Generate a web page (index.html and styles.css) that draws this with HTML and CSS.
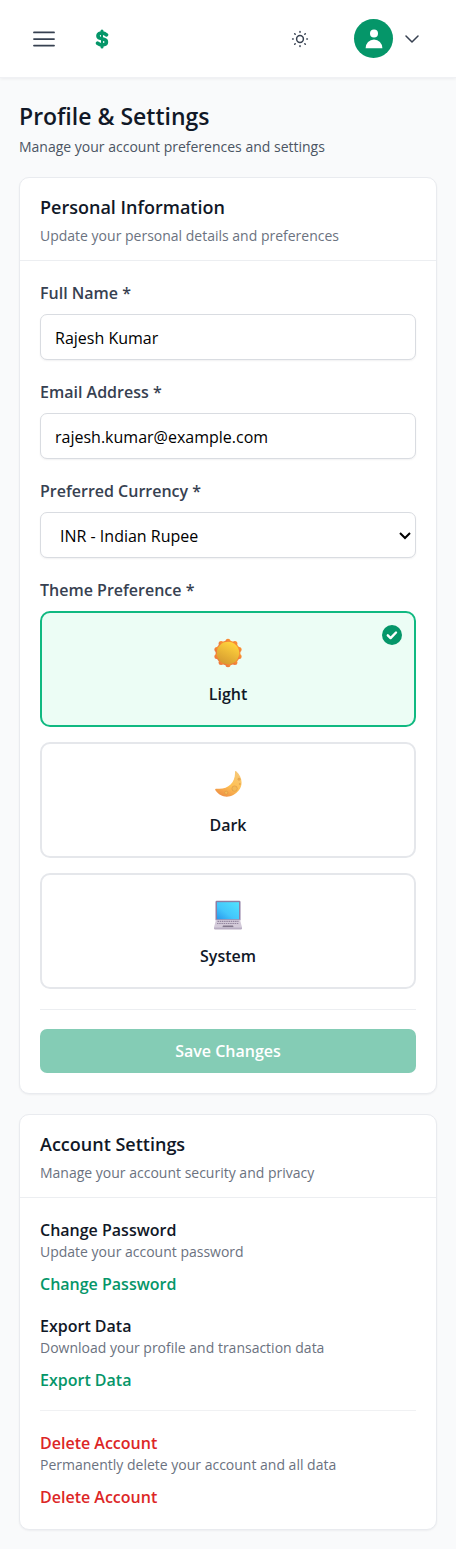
FILE: index.html
```html
<!DOCTYPE html>
<html lang="en">
<head>
<meta charset="utf-8">
<meta name="viewport" content="width=device-width, initial-scale=1">
<title>Profile &amp; Settings</title>
<link rel="stylesheet" href="styles.css">
</head>
<body>
<header class="topbar">
  <div class="topbar-group topbar-start">
    <button class="icon-button" type="button" aria-label="Open menu">
      <svg width="28" height="28" viewBox="0 0 24 24" fill="none" stroke="currentColor" stroke-width="1.5" stroke-linecap="round" stroke-linejoin="round"><path d="M3.4 6.4h17.2M3.4 12h17.2M3.4 17.6h17.2"/></svg>
    </button>
    <a class="brand" href="#" aria-label="Home">
      <svg width="14" height="20" viewBox="0 0 14 20" fill="none" stroke="currentColor" stroke-width="3.6" stroke-linecap="round" stroke-linejoin="round"><path d="M11.5 5.8C9.8 4.3 7.6 3.8 5.3 4.3C2.4 5 2.2 8.2 4.8 9.1L9.3 10.5C12.2 11.5 12 14.9 9.2 15.6C6.7 16.2 4.3 15.5 2.6 14.2"/><path d="M7 2v2M7 16v2" stroke-width="3"/><path d="M7 5v10" stroke-width="2"/></svg>
    </a>
  </div>
  <div class="topbar-group topbar-end">
    <button class="icon-button" type="button" aria-label="Toggle theme">
      <svg width="18" height="18" viewBox="0 0 18 18" fill="none" stroke="currentColor" stroke-width="1.5" stroke-linecap="round"><circle cx="9" cy="9" r="3.4"/><path d="M9 1.6v.6M9 15.8v.6M1.6 9h.6M15.8 9h.6M3.7 3.7l.5.5M13.8 13.8l.5.5M3.7 14.3l.5-.5M13.8 4.2l.5-.5"/></svg>
    </button>
    <button class="account-button" type="button" aria-label="Account menu">
      <span class="avatar"><svg width="18" height="20" viewBox="0 0 18 20" fill="currentColor"><circle cx="9" cy="4.6" r="4"/><path d="M.6 19.2a8.4 8.8 0 0 1 16.8 0z"/></svg></span>
      <svg width="14" height="8" viewBox="0 0 14 8" fill="none" stroke="currentColor" stroke-width="1.5" stroke-linecap="round" stroke-linejoin="round"><path d="M1 1l6 6 6-6"/></svg>
    </button>
  </div>
</header>

<main class="page">
  <div class="page-heading">
    <h1 class="page-title">Profile &amp; Settings</h1>
    <p class="page-subtitle">Manage your account preferences and settings</p>
  </div>

  <section class="card">
    <div class="card-header">
      <h2 class="card-title">Personal Information</h2>
      <p class="card-description">Update your personal details and preferences</p>
    </div>
    <form class="card-body form">
      <div class="field">
        <label class="label" for="name">Full Name *</label>
        <input class="control" id="name" type="text" value="Rajesh Kumar">
      </div>
      <div class="field">
        <label class="label" for="email">Email Address *</label>
        <input class="control" id="email" type="email" value="rajesh.kumar@example.com">
      </div>
      <div class="field">
        <label class="label" for="currency">Preferred Currency *</label>
        <div class="select">
          <select class="control control-select" id="currency"><option>INR - Indian Rupee</option></select>
          <svg class="select-arrow" width="12" height="8" viewBox="0 0 12 8" fill="none" stroke="#000" stroke-width="2"><path d="M1 1l5 5 5-5"/></svg>
        </div>
      </div>
      <div class="field" role="radiogroup" aria-labelledby="theme-label">
        <span class="label" id="theme-label">Theme Preference *</span>
        <div class="themes">
          <label class="theme">
            <input class="theme-radio" type="radio" name="theme" value="light" checked>
            <svg class="theme-icon" viewBox="0 0 30 30">
              <defs>
                <linearGradient id="sun-rays" x1="1" y1="0" x2="0" y2="1"><stop offset="0" stop-color="#ff9a2e"/><stop offset="1" stop-color="#e8703f"/></linearGradient>
                <linearGradient id="sun-disc" x1=".75" y1=".1" x2=".3" y2="1"><stop offset="0" stop-color="#ffd23c"/><stop offset="1" stop-color="#d59a30"/></linearGradient>
              </defs>
              <g fill="url(#sun-rays)"><circle cx="15" cy="15" r="12.4"/><circle cx="15" cy="3.3" r="2.5"/><circle cx="21.9" cy="5.5" r="2.5"/><circle cx="26.1" cy="11.4" r="2.5"/><circle cx="26.1" cy="18.6" r="2.5"/><circle cx="21.9" cy="24.5" r="2.5"/><circle cx="15" cy="26.7" r="2.5"/><circle cx="8.1" cy="24.5" r="2.5"/><circle cx="3.9" cy="18.6" r="2.5"/><circle cx="3.9" cy="11.4" r="2.5"/><circle cx="8.1" cy="5.5" r="2.5"/></g>
              <circle cx="15" cy="15" r="11.2" fill="url(#sun-disc)"/>
            </svg>
            <span class="theme-name">Light</span>
            <svg class="theme-check" viewBox="0 0 20 20"><circle cx="10" cy="10" r="10" fill="#059669"/><path d="M5.800 10.300l2.800 2.800 5.400-5.600" fill="none" stroke="#fff" stroke-width="2.400" stroke-linecap="round" stroke-linejoin="round"/></svg>
          </label>
          <label class="theme">
            <input class="theme-radio" type="radio" name="theme" value="dark">
            <svg class="theme-icon" viewBox="0 0 30 30">
              <defs><linearGradient id="moon" x1=".8" y1="0" x2=".3" y2="1"><stop offset="0" stop-color="#f6c879"/><stop offset=".55" stop-color="#ffc153"/><stop offset="1" stop-color="#ee9146"/></linearGradient></defs>
              <path d="M23.200 2.200c6 5.200 7.200 13.500 2.500 19.400C20 29 8.500 30.500 2.400 21.300c-.7-1.100.1-1.800 1.300-1.600C14.600 21 22.500 14 22 3c0-.9.5-1.300 1.200-.8z" fill="url(#moon)"/>
              <g fill="#f3b955" stroke="#dc9546" stroke-width=".6"><circle cx="21.600" cy="19.600" r="2.700"/><circle cx="13.200" cy="23.700" r="1.600"/><circle cx="26" cy="10.200" r="1.100"/><circle cx="26.800" cy="15" r=".6"/></g>
            </svg>
            <span class="theme-name">Dark</span>
          </label>
          <label class="theme">
            <input class="theme-radio" type="radio" name="theme" value="system">
            <svg class="theme-icon" viewBox="0 0 30 30">
              <defs><linearGradient id="screen" x1="0" y1="1" x2="1" y2="0"><stop offset="0" stop-color="#2898ec"/><stop offset=".4" stop-color="#43c6fb"/><stop offset="1" stop-color="#50e3ff"/></linearGradient></defs>
              <rect x="2.500" y=".8" width="25" height="20" rx="1.200" fill="#8d7da3"/>
              <rect x="4" y="2.200" width="22" height="17" fill="url(#screen)"/>
              <path d="M3 19.800h24l2 7.500H1z" fill="#d3cad9"/>
              <path d="M4.500 21.300h21M4 23.500h22" stroke="#93869f" stroke-width="1.200" stroke-dasharray="1.500 .7"/>
              <path d="M10 25.400h10l.6 1.900H9.400z" fill="#83798d"/>
              <path d="M1 27.300h28v1.300q0 .8-.8.8H1.800q-.8 0-.8-.8z" fill="#b9aec3"/>
            </svg>
            <span class="theme-name">System</span>
          </label>
        </div>
      </div>
      <div class="form-actions">
        <button class="save-button" type="submit" disabled>Save Changes</button>
      </div>
    </form>
  </section>

  <section class="card">
    <div class="card-header">
      <h2 class="card-title">Account Settings</h2>
      <p class="card-description">Manage your account security and privacy</p>
    </div>
    <div class="card-body actions">
      <div class="action">
        <h3 class="action-title">Change Password</h3>
        <p class="action-description">Update your account password</p>
        <button class="action-button" type="button">Change Password</button>
      </div>
      <div class="action">
        <h3 class="action-title">Export Data</h3>
        <p class="action-description">Download your profile and transaction data</p>
        <button class="action-button" type="button">Export Data</button>
      </div>
      <div class="action action-danger">
        <h3 class="action-title">Delete Account</h3>
        <p class="action-description">Permanently delete your account and all data</p>
        <button class="action-button" type="button">Delete Account</button>
      </div>
    </div>
  </section>
</main>
</body>
</html>
```
FILE: styles.css
```css
*, *::before, *::after { box-sizing: border-box; }
body {
  margin: 0;
  background: #f9fafb;
  color: #111827;
  font-family: "Segoe UI", "Open Sans", "Noto Sans", sans-serif;
  font-size: 16px;
  line-height: 24px;
}
h1, h2, h3, p { margin: 0; }
button, input, select { font: inherit; }
button { padding: 0; border: 0; background: none; cursor: pointer; }
svg { display: block; }

.topbar {
  display: flex;
  align-items: center;
  justify-content: space-between;
  height: 78px;
  padding: 0 37px 0 30px;
  background: #fff;
  border-bottom: 1px solid #f0f1f4;
  box-shadow: 0 1px 3px rgba(17, 24, 39, .06);
  color: #374151;
}
.topbar-group { display: flex; align-items: center; }
.topbar-start { gap: 37px; }
.topbar-end { gap: 45px; }
.brand { color: #059669; }
.icon-button { color: inherit; }
.account-button { display: flex; align-items: center; gap: 12px; color: inherit; }
.avatar {
  display: grid;
  place-items: center;
  width: 39px;
  height: 39px;
  border-radius: 50%;
  background: #059669;
  color: #fff;
}

.page { display: flex; flex-direction: column; gap: 20px; padding: 20px 19px; }
.page-heading { display: flex; flex-direction: column; gap: 3px; }
.page-title { font-size: 23px; line-height: 36px; font-weight: 600; }
.page-subtitle { font-size: 14px; line-height: 20px; color: #4b5563; }

.card {
  background: #fff;
  border: 1px solid #e9ebef;
  border-radius: 10px;
  box-shadow: 0 1px 2px rgba(17, 24, 39, .05);
}
.card-header { padding: 15px 20px 14px; border-bottom: 1px solid #eceef1; }
.card-title { font-size: 18px; line-height: 28px; font-weight: 600; }
.card-description { padding-top: 5px; font-size: 14px; line-height: 20px; color: #6b7280; }
.card-body { padding: 20px; }

.form { display: flex; flex-direction: column; gap: 20px; }
.field { display: flex; flex-direction: column; gap: 9px; }
.label { font-weight: 600; color: #374151; }
.control {
  display: block;
  width: 100%;
  height: 46px;
  padding: 2px 14px 0;
  border: 1px solid #d9dce1;
  border-radius: 7px;
  background: #fff;
  box-shadow: 0 1px 2px rgba(17, 24, 39, .06);
  color: #000;
}
.select { position: relative; }
.control-select { padding: 2px 24px 0 19px; appearance: none; }
.select-arrow { position: absolute; top: 20px; right: 5px; pointer-events: none; }

.themes { display: grid; gap: 15px; }
.theme {
  position: relative;
  display: flex;
  flex-direction: column;
  align-items: center;
  gap: 16px;
  padding: 25px 20px 21px;
  border: 2px solid #e5e7eb;
  border-radius: 10px;
  background: #fff;
  cursor: pointer;
}
.theme:has(.theme-radio:checked) { border-color: #10b981; background: #ecfdf5; }
.theme-radio { position: absolute; inset: 0; margin: 0; opacity: 0; }
.theme-icon { width: 30px; height: 30px; }
.theme-name { line-height: 20px; font-weight: 600; }
.theme-check { position: absolute; top: 12px; right: 12px; width: 20px; height: 20px; }

.form-actions { padding-top: 19px; border-top: 1px solid #eceef1; }
.save-button {
  width: 100%;
  height: 44px;
  border-radius: 7px;
  background: #84ccb5;
  color: #fff;
  font-weight: 600;
}

.actions { display: flex; flex-direction: column; gap: 18px; }
.action { display: flex; flex-direction: column; align-items: flex-start; }
.action-title { font-size: 16px; font-weight: 600; }
.action-description { padding-bottom: 10px; font-size: 14px; line-height: 20px; color: #6b7280; }
.action-button { color: #059669; font-weight: 600; }
.action-danger { padding-top: 20px; border-top: 1px solid #f0f1f3; }
.action-danger .action-title, .action-danger .action-button { color: #dc2626; }
```
